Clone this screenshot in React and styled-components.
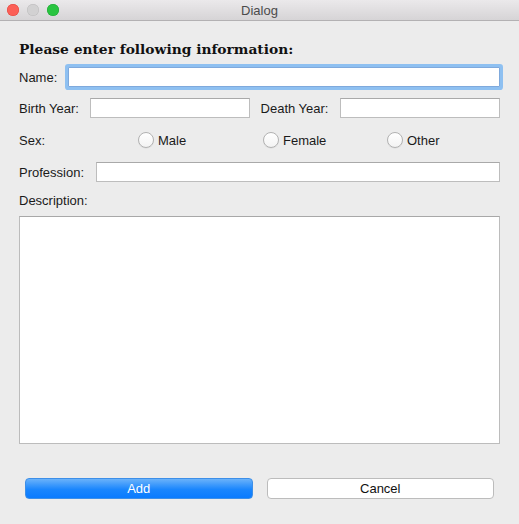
import React from "react";
import styled, { createGlobalStyle } from "styled-components";

const Global = createGlobalStyle`
  html, body { margin: 0; padding: 0; background: #ececec; }
  * { box-sizing: border-box; }
`;

const Window = styled.div`
  width: 519px;
  height: 524px;
  background: #ececec;
  font-family: "Liberation Sans", Arial, sans-serif;
  font-size: 13px;
  color: #1a1a1a;
  display: flex;
  flex-direction: column;
  overflow: hidden;
`;

const TitleBar = styled.div`
  position: relative;
  height: 21px;
  flex: none;
  background: linear-gradient(#ebe9eb, #d6d4d6);
  border-bottom: 1px solid #b3b1b3;
  display: flex;
  align-items: center;
  justify-content: center;
`;

const Lights = styled.div`
  position: absolute;
  left: 7px;
  top: 4px;
  display: flex;
  gap: 8px;
`;

const Light = styled.span`
  width: 12px;
  height: 12px;
  border-radius: 50%;
  background: ${(p) => p.$c};
  box-shadow: inset 0 0 0 0.5px ${(p) => p.$b};
`;

const Title = styled.span`
  font-size: 13px;
  color: #4b4b4b;
`;

const Content = styled.div`
  padding: 0 19px 0 19px;
  display: flex;
  flex-direction: column;
`;

const Heading = styled.div`
  margin-top: 18px;
  height: 20px;
  line-height: 20px;
  font-family: "DejaVu Serif", Georgia, serif;
  font-weight: bold;
  font-size: 13.8px;
  color: #111;
`;

const Row = styled.div`
  display: flex;
  align-items: center;
  height: ${(p) => p.$h || 20}px;
  margin-top: ${(p) => p.$mt}px;
`;

const Label = styled.span`
  flex: none;
  margin-right: ${(p) => p.$mr || 0}px;
  margin-left: ${(p) => p.$ml || 0}px;
  white-space: nowrap;
`;

const Input = styled.div`
  flex: 1;
  height: 20px;
  background: #fff;
  border: 1px solid ${(p) => (p.$focus ? "#7fa9dc" : "#bdbdbd")};
  border-top-color: ${(p) => (p.$focus ? "#7fa9dc" : "#a9a9a9")};
  box-shadow: ${(p) => (p.$focus ? "0 0 0 3px #8ec0f1" : "none")};
  border-radius: ${(p) => (p.$focus ? "1px" : "0")};
`;

const SexGrid = styled.div`
  display: grid;
  grid-template-columns: 119px 125px 124px 1fr;
  align-items: center;
  height: 20px;
  margin-top: 12px;
`;

const RadioItem = styled.label`
  display: flex;
  align-items: center;
  gap: 4px;
`;

const RadioCircle = styled.span`
  width: 16px;
  height: 16px;
  border-radius: 50%;
  border: 1px solid #b2b2b2;
  background: linear-gradient(#ffffff, #f3f3f3);
  box-shadow: 0 0.5px 0.5px rgba(0, 0, 0, 0.08);
`;

const TextArea = styled.div`
  height: 228px;
  margin-top: 6px;
  background: #fff;
  border: 1px solid #bcbcbc;
  border-top-color: #a8a8a8;
`;

const Buttons = styled.div`
  display: flex;
  gap: 14px;
  margin-top: 34px;
  padding: 0 6px;
`;

const Button = styled.div`
  flex: 1;
  height: 21px;
  border-radius: 4px;
  display: flex;
  align-items: center;
  justify-content: center;
  font-size: 13px;
  ${(p) =>
    p.$primary
      ? `
    background: linear-gradient(#6ab2fa, #1a86fd 55%, #0a7bff);
    color: #fff;
    border: 1px solid #3d8fe8;
  `
      : `
    background: #fff;
    color: #111;
    border: 1px solid #bcbcbc;
  `}
`;

export default function App() {
  return (
    <Window>
      <Global />
      <TitleBar>
        <Lights>
          <Light $c="#fc5f57" $b="#e0443e" />
          <Light $c="#d2d1d2" $b="#bcbbbc" />
          <Light $c="#29c440" $b="#1fa533" />
        </Lights>
        <Title>Dialog</Title>
      </TitleBar>
      <Content>
        <Heading>Please enter following information:</Heading>
        <Row $mt={8} $h={20}>
          <Label $mr={11}>Name:</Label>
          <Input $focus />
        </Row>
        <Row $mt={11}>
          <Label $mr={11}>Birth Year:</Label>
          <Input />
          <Label $ml={11} $mr={12}>Death Year:</Label>
          <Input />
        </Row>
        <SexGrid>
          <Label>Sex:</Label>
          <RadioItem>
            <RadioCircle />
            Male
          </RadioItem>
          <RadioItem>
            <RadioCircle />
            Female
          </RadioItem>
          <RadioItem>
            <RadioCircle />
            Other
          </RadioItem>
        </SexGrid>
        <Row $mt={12}>
          <Label $mr={12}>Profession:</Label>
          <Input />
        </Row>
        <Row $mt={8}>
          <Label>Description:</Label>
        </Row>
        <TextArea />
        <Buttons>
          <Button $primary>Add</Button>
          <Button>Cancel</Button>
        </Buttons>
      </Content>
    </Window>
  );
}
